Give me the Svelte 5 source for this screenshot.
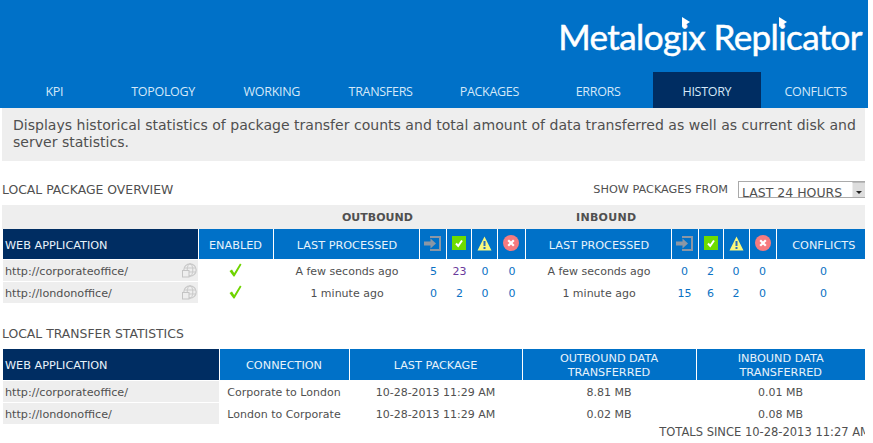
<script lang="ts">
    const tabs = ['KPI', 'TOPOLOGY', 'WORKING', 'TRANSFERS', 'PACKAGES', 'ERRORS', 'HISTORY', 'CONFLICTS'];

    const packages = [
        { url: 'http://corporateoffice/', out: 'A few seconds ago', outCounts: [5, 23, 0, 0], inn: 'A few seconds ago', inCounts: [0, 2, 0, 0], conflicts: 0 },
        { url: 'http://londonoffice/', out: '1 minute ago', outCounts: [0, 2, 0, 0], inn: '1 minute ago', inCounts: [15, 6, 2, 0], conflicts: 0 }
    ];

    const transfers = [
        { url: 'http://corporateoffice/', connection: 'Corporate to London', last: '10-28-2013 11:29 AM', outbound: '8.81 MB', inbound: '0.01 MB' },
        { url: 'http://londonoffice/', connection: 'London to Corporate', last: '10-28-2013 11:29 AM', outbound: '0.02 MB', inbound: '0.08 MB' }
    ];

    const statusIcons = ['login', 'ok', 'warn', 'error'];
</script>

{#snippet statusIcon(kind: string)}
    {#if kind === 'login'}
        <svg width="17" height="15" viewBox="0 0 17 15" class="icon">
            <path d="M6 1h10v13H6" fill="none" stroke="#8b97a5" stroke-width="2" />
            <path d="M0 5.5h6.5V2.5L12 7.5l-5.5 5v-3H0z" fill="#8b97a5" />
        </svg>
    {:else if kind === 'ok'}
        <svg width="14" height="14" viewBox="0 0 14 14" class="icon">
            <rect width="14" height="14" fill="#6edc00" />
            <path d="M4 7.5l2.2 2.5L10 4.5" fill="none" stroke="#fff" stroke-width="2" />
        </svg>
    {:else if kind === 'warn'}
        <svg width="15" height="15" viewBox="0 0 15 15" class="icon">
            <path d="M7.5 0.5L14.5 14.5H0.5z" fill="#f8f87c" />
            <rect x="6.5" y="5" width="2" height="5" fill="#2a6fb8" />
            <rect x="6.5" y="11" width="2" height="2" fill="#2a6fb8" />
        </svg>
    {:else}
        <svg width="16" height="16" viewBox="0 0 16 16" class="icon">
            <circle cx="8" cy="8" r="8" fill="#f67b7f" />
            <path d="M5.2 5.2l5.6 5.6M10.8 5.2l-5.6 5.6" stroke="#fff" stroke-width="2.2" />
        </svg>
    {/if}
{/snippet}

{#snippet globe()}
    <svg width="15" height="15" viewBox="0 0 15 15" class="globe">
        <circle cx="8" cy="7" r="6.2" fill="none" stroke="#c9c9c9" stroke-width="1.2" />
        <ellipse cx="8" cy="7" rx="2.8" ry="6.2" fill="none" stroke="#c9c9c9" />
        <path d="M2 5h12M2 9h12" stroke="#c9c9c9" />
        <rect x="0.5" y="7.5" width="6.5" height="6.5" fill="#eee" stroke="#c4c4c4" />
    </svg>
{/snippet}

{#snippet tick()}
    <svg width="13" height="14" viewBox="0 0 13 14" class="tick">
        <path d="M0.5 8L3 6.5L5.2 10L11 0.5L12.5 1.5L5.5 13.5H4.5z" fill="#6fd400" />
    </svg>
{/snippet}

<header class="banner">
    <div class="logo">Metalog<span class="dot">i</span>x Repl<span class="dot">i</span>cator</div>
    <nav class="tabs">
        {#each tabs as tab}
            <span class="tab" class:active={tab === 'HISTORY'}>{tab}</span>
        {/each}
    </nav>
</header>

<main class="page">
    <p class="intro">Displays historical statistics of package transfer counts and total amount of data transferred as well as current disk and server statistics.</p>

    <div class="section-head">
        <h2>LOCAL PACKAGE OVERVIEW</h2>
        <div class="filter">
            <span>SHOW PACKAGES FROM</span>
            <div class="select">
                <span class="select-text">LAST 24 HOURS</span>
                <span class="select-btn"></span>
            </div>
        </div>
    </div>

    <div class="band">
        <span class="band-out">OUTBOUND</span>
        <span class="band-in">INBOUND</span>
    </div>

    <table class="overview">
        <colgroup>
            <col style="width:195px" /><col style="width:75px" /><col style="width:146px" />
            <col style="width:27px" /><col style="width:25px" /><col style="width:26px" /><col style="width:28px" />
            <col style="width:146px" />
            <col style="width:27px" /><col style="width:25px" /><col style="width:26px" /><col style="width:27px" />
            <col style="width:89px" />
        </colgroup>
        <thead>
            <tr>
                <th class="app">WEB APPLICATION</th>
                <th>ENABLED</th>
                <th class="lp">LAST PROCESSED</th>
                {#each statusIcons as kind}
                    <th class="ico">{@render statusIcon(kind)}</th>
                {/each}
                <th class="lp">LAST PROCESSED</th>
                {#each statusIcons as kind}
                    <th class="ico">{@render statusIcon(kind)}</th>
                {/each}
                <th class="conf">CONFLICTS</th>
            </tr>
        </thead>
        <tbody>
            {#each packages as row}
                <tr>
                    <td class="url"><span>{row.url}</span>{@render globe()}</td>
                    <td class="ctr">{@render tick()}</td>
                    <td class="ctr lp">{row.out}</td>
                    {#each row.outCounts as n}
                        <td class="ctr num lp" class:visited={n === 23}>{n}</td>
                    {/each}
                    <td class="ctr lp">{row.inn}</td>
                    {#each row.inCounts as n}
                        <td class="ctr num">{n}</td>
                    {/each}
                    <td class="ctr num conf">{row.conflicts}</td>
                </tr>
            {/each}
        </tbody>
    </table>

    <h2 class="second">LOCAL TRANSFER STATISTICS</h2>

    <table class="stats">
        <colgroup>
            <col style="width:216px" /><col style="width:130px" /><col style="width:173px" /><col style="width:174px" /><col style="width:169px" />
        </colgroup>
        <thead>
            <tr>
                <th class="app">WEB APPLICATION</th>
                <th>CONNECTION</th>
                <th>LAST PACKAGE</th>
                <th>OUTBOUND DATA<br />TRANSFERRED</th>
                <th>INBOUND DATA<br />TRANSFERRED</th>
            </tr>
        </thead>
        <tbody>
            {#each transfers as row}
                <tr>
                    <td class="url"><span>{row.url}</span></td>
                    <td class="ctr">{row.connection}</td>
                    <td class="ctr">{row.last}</td>
                    <td class="ctr">{row.outbound}</td>
                    <td class="ctr">{row.inbound}</td>
                </tr>
            {/each}
        </tbody>
    </table>

    <div class="totals">TOTALS SINCE 10-28-2013 11:27 AM</div>
</main>

<style>
    :global(body) {
        background: #fff;
        overflow: hidden;
    }

    .banner {
        width: 868px;
        height: 108px;
        background: #0071c8;
        overflow: hidden;
        display: flex;
        flex-direction: column;
        justify-content: flex-end;
    }

    .logo {
        font-family: "Lato", sans-serif;
        font-size: 35px;
        letter-spacing: -0.6px;
        -webkit-text-stroke: 0.5px #fff;
        line-height: 44px;
        color: #fff;
        text-align: right;
        padding-right: 6px;
        margin-bottom: 14px;
        white-space: nowrap;
    }

    .dot {
        position: relative;
    }

    .dot::after {
        content: '';
        position: absolute;
        left: 1px;
        top: 2px;
        width: 0;
        height: 0;
        border-style: solid;
        border-width: 5px 0 5px 8px;
        border-color: transparent transparent transparent #fff;
    }

    .tabs {
        display: grid;
        grid-template-columns: repeat(8, 108.75px);
        height: 36px;
    }

    .tab {
        font-family: "Open Sans", sans-serif;
        font-size: 12.5px;
        line-height: 40px;
        color: #d4e8f8;
        text-align: center;
        letter-spacing: -0.3px;
    }

    .tab.active {
        background: #002d62;
    }

    .page {
        width: 863px;
        margin-left: 2px;
        overflow: hidden;
        font-family: "DejaVu Sans", sans-serif;
        font-size: 11px;
        color: #505050;
    }

    .intro {
        margin: 0;
        background: #eee;
        height: 53px;
        box-sizing: border-box;
        padding: 9px 6px 0 11px;
        font-size: 14.05px;
        line-height: 17px;
    }

    .section-head {
        display: flex;
        justify-content: space-between;
        align-items: flex-start;
        height: 44px;
        padding-top: 20px;
        box-sizing: border-box;
    }

    h2 {
        margin: 0;
        font-size: 12.4px;
        font-weight: 400;
        line-height: 17px;
    }

    .filter {
        display: flex;
        gap: 10px;
        font-size: 11.25px;
        line-height: 18px;
    }

    .select {
        width: 127px;
        height: 17px;
        box-sizing: border-box;
        border: 1px solid #aaa;
        border-right: none;
        position: relative;
        overflow: hidden;
        font-size: 12.5px;
        line-height: 21px;
        padding-left: 3px;
    }

    .select-text {
        white-space: nowrap;
    }

    .select-btn {
        position: absolute;
        right: 0;
        top: 0;
        width: 12px;
        height: 15px;
        background: #ddd;
        border-left: 1px solid #eee;
        border-top: 1px solid #bbb;
    }

    .select-btn::after {
        content: '';
        position: absolute;
        left: 3px;
        top: 8px;
        border-style: solid;
        border-width: 3px 3px 0 3px;
        border-color: #222 transparent transparent transparent;
    }

    .band {
        background: #eee;
        height: 24px;
        position: relative;
        font-weight: 700;
        line-height: 26px;
    }

    .band-out {
        position: absolute;
        left: 340px;
    }

    .band-in {
        position: absolute;
        left: 574px;
        letter-spacing: 0.3px;
    }

    table {
        border-collapse: collapse;
        table-layout: fixed;
        width: 862px;
        margin-left: 1px;
    }

    th {
        background: #0071c8;
        color: #e8f3fb;
        font-weight: 400;
        font-size: 11.25px;
        border-right: 1px solid #fff;
        padding: 2px 0 0;
        text-align: center;
        line-height: 14px;
    }

    th:last-child {
        border-right: none;
    }

    th.app {
        background: #002d62;
        text-align: left;
        padding-left: 2px;
    }

    th.ico {
        padding: 0 0 2px;
    }

    .overview th {
        height: 27px;
        padding-top: 3px;
    }

    .overview th.ico {
        height: 28px;
        padding: 0 0 2px;
    }

    .overview th.lp,
    td.lp {
        padding-left: 2px;
    }

    .overview th.conf,
    td.conf {
        padding-left: 6px;
    }

    .stats th {
        height: 29px;
    }

    td {
        padding: 2px 0 0;
        height: 19px;
        border-bottom: 1px solid #fff;
        border-top: 1px solid #fff;
    }

    td.url {
        background: #eee;
        padding: 2px 2px 0;
        font-size: 11.2px;
        position: relative;
    }

    td.url .globe {
        position: absolute;
        right: 1px;
        top: 3px;
    }

    .ctr {
        text-align: center;
    }

    .num {
        color: #0a72c4;
    }

    .visited {
        color: #6a3a9c;
    }

    .icon {
        display: block;
        margin: 0 auto;
    }

    .tick {
        display: block;
        margin: -3px auto 0;
    }

    .second {
        margin-top: 21px;
        height: 24px;
    }

    .totals {
        text-align: right;
        white-space: nowrap;
        font-size: 11.5px;
        margin-right: -5px;
        line-height: 16px;
        margin-top: -1px;
    }
</style>
